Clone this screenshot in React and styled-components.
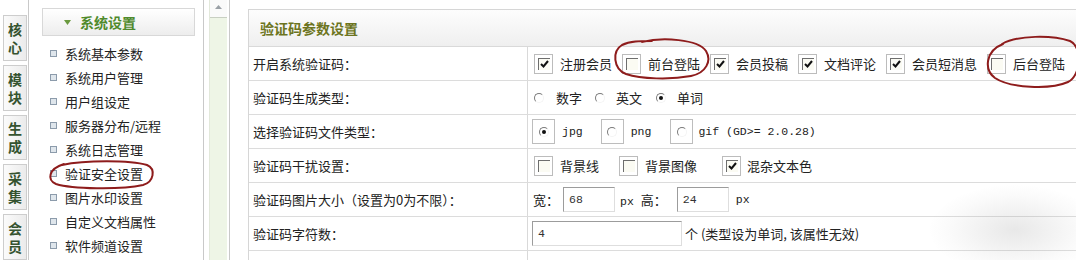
import React from 'react';
import styled, { createGlobalStyle } from 'styled-components';

const GlobalStyle = createGlobalStyle`
  html, body {
    margin: 0;
    padding: 0;
    background: #ffffff;
  }
  body {
    font-family: "Noto Sans CJK SC", "Noto Sans", sans-serif;
    font-size: 13px;
    color: #222222;
  }
`;

const Page = styled.div`
  position: relative;
  width: 1076px;
  height: 260px;
  overflow: hidden;
  display: flex;
  align-items: flex-start;
`;

/* left vertical tabs */
const TabBar = styled.div`
  width: 29px;
  height: 260px;
  box-sizing: border-box;
  border-right: 1px solid #c9c9c9;
  padding: 15px 0 0 3px;
  display: flex;
  flex-direction: column;
  gap: 4px;
  flex-shrink: 0;
`;

const Tab = styled.div`
  width: 24px;
  height: 47px;
  box-sizing: border-box;
  border: 1px solid #cdcdcd;
  background: linear-gradient(to right, #fbfbfb, #ebebeb);
  display: flex;
  flex-direction: column;
  align-items: center;
  justify-content: center;
  font-size: 14px;
  font-weight: bold;
  line-height: 18px;
  color: #35532f;
`;

/* menu */
const Menu = styled.div`
  width: 175px;
  height: 260px;
  box-sizing: border-box;
  border-right: 1px solid #c9c9c9;
  padding: 8px 0 0 13px;
  flex-shrink: 0;
`;

const MenuHeader = styled.div`
  width: 153px;
  height: 28px;
  box-sizing: border-box;
  border: 1px solid #d8d8d8;
  background: linear-gradient(#ffffff, #ededed);
  display: flex;
  align-items: center;
  gap: 9px;
  padding-left: 21px;
  font-size: 14px;
  font-weight: bold;
  color: #4f8a2c;
`;

const MenuList = styled.ul`
  list-style: none;
  margin: 5px 0 0 0;
  padding: 0 0 0 8px;
`;

const MenuItem = styled.li`
  height: 24px;
  display: flex;
  align-items: center;
  gap: 8px;
  font-size: 13px;
  color: #222;
  white-space: nowrap;
`;

const Bullet = styled.span`
  width: 5px;
  height: 5px;
  border: 1px solid #8c9bab;
  background: #dfe6ec;
  flex-shrink: 0;
`;

/* scroll strip */
const Strip = styled.div`
  width: 26px;
  height: 260px;
  box-sizing: border-box;
  border-right: 1px solid #c9c9c9;
  padding: 0 2px 0 5px;
  flex-shrink: 0;
`;

const Track = styled.div`
  height: 100%;
  background: #eef5e6;
  border-left: 1px solid #e2e8da;
`;

const ScrollButton = styled.div`
  height: 18px;
  box-sizing: border-box;
  background: #fafafa;
  border-bottom: 1px solid #c8cfc2;
  display: flex;
  justify-content: center;
  padding-top: 5px;
`;

/* main table */
const Panel = styled.div`
  margin: 9px 0 0 18px;
  width: 860px;
  flex-shrink: 0;
  border-top: 1px solid #d6d6d6;
  border-left: 1px solid #d6d6d6;
`;

const PanelHeader = styled.div`
  height: 37px;
  box-sizing: border-box;
  border-bottom: 1px solid #d9d9d9;
  background: linear-gradient(#fdfdfd, #efefef);
  padding-left: 11px;
  display: flex;
  align-items: center;
  font-size: 14px;
  font-weight: bold;
  color: #6c7420;
`;

const Row = styled.div`
  height: 34px;
  box-sizing: border-box;
  border-bottom: 1px solid #dcdcdc;
  display: grid;
  grid-template-columns: 279px 1fr;
`;

const Label = styled.div`
  border-right: 1px solid #d9d9d9;
  padding-left: 4px;
  display: flex;
  align-items: center;
  font-size: 13px;
  white-space: nowrap;
`;

const Value = styled.div`
  padding-left: ${({ $pad }) => $pad ?? 5}px;
  display: flex;
  align-items: center;
  font-size: 13px;
  white-space: nowrap;
`;

const Option = styled.span`
  display: inline-flex;
  align-items: center;
  gap: ${({ $gap }) => $gap ?? 7}px;
  margin-right: ${({ $space }) => $space ?? 10}px;
`;

const CheckFrame = styled.span`
  width: 19px;
  height: 20px;
  box-sizing: border-box;
  border: 1px solid #bcbcbc;
  background: #ffffff;
  display: inline-flex;
  align-items: center;
  justify-content: center;
`;

const CheckInner = styled.span`
  width: 12px;
  height: 12px;
  box-sizing: border-box;
  border-top: 1px solid #6e6e6e;
  border-left: 1px solid #6e6e6e;
  background: #fbfbf3;
  display: flex;
  align-items: center;
  justify-content: center;
`;

const RadioFrame = styled.span`
  width: 23px;
  height: 25px;
  box-sizing: border-box;
  border: 1px solid #bdbdbd;
  display: inline-flex;
  align-items: center;
  justify-content: center;
`;

const RadioDot = styled.span`
  width: 10px;
  height: 10px;
  box-sizing: border-box;
  border-radius: 50%;
  border: 1px solid;
  border-color: #7a7a7a #f4f4f4 #f4f4f4 #7a7a7a;
  background: #ffffff;
  display: inline-flex;
  align-items: center;
  justify-content: center;
  &::after {
    content: '';
    width: 4px;
    height: 4px;
    border-radius: 50%;
    background: ${({ $on }) => ($on ? '#111' : 'transparent')};
  }
`;

const Mono = styled.span`
  font-family: "Liberation Mono", "DejaVu Sans Mono", monospace;
  font-size: 11.5px;
  color: #222;
`;

const TextBox = styled.span`
  width: ${({ $w }) => $w}px;
  height: 25px;
  box-sizing: border-box;
  border: 1px solid;
  border-color: #9c9c9c #dedede #dedede #9c9c9c;
  background: #fff;
  display: inline-flex;
  align-items: center;
  padding-left: 5px;
  font-family: "Liberation Mono", "DejaVu Sans Mono", monospace;
  font-size: 11.5px;
  color: #333;
`;

const Marks = styled.svg`
  position: absolute;
  left: 0;
  top: 0;
  pointer-events: none;
`;

const Smudge = styled.div`
  position: absolute;
  left: 930px;
  top: 185px;
  width: 170px;
  height: 90px;
  border-radius: 50%;
  background: radial-gradient(ellipse at center, rgba(150,150,150,0.22), rgba(200,200,200,0.08) 55%, rgba(255,255,255,0) 72%);
  pointer-events: none;
`;

const Check = () => (
  <svg width="9" height="8" viewBox="0 0 9 8">
    <path d="M1 4 L3.5 6.5 L8 1" stroke="#111" strokeWidth="2" fill="none" />
  </svg>
);

const Checkbox = ({ on }) => (
  <CheckFrame>
    <CheckInner>{on && <Check />}</CheckInner>
  </CheckFrame>
);

const tabs = [['核', '心'], ['模', '块'], ['生', '成'], ['采', '集'], ['会', '员']];

const menu = [
  '系统基本参数',
  '系统用户管理',
  '用户组设定',
  '服务器分布/远程',
  '系统日志管理',
  '验证安全设置',
  '图片水印设置',
  '自定义文档属性',
  '软件频道设置',
];

const captchaOn = [
  ['注册会员', true],
  ['前台登陆', false],
  ['会员投稿', true],
  ['文档评论', true],
  ['会员短消息', true],
  ['后台登陆', false],
];

export default function App() {
  return (
    <>
      <GlobalStyle />
      <Page>
        <TabBar>
          {tabs.map(([a, b]) => (
            <Tab key={a}>
              <span>{a}</span>
              <span>{b}</span>
            </Tab>
          ))}
        </TabBar>

        <Menu>
          <MenuHeader>
            <svg width="7" height="5" viewBox="0 0 7 5">
              <path d="M0 0 L7 0 L3.5 5 Z" fill="#6a9a3e" />
            </svg>
            系统设置
          </MenuHeader>
          <MenuList>
            {menu.map((m) => (
              <MenuItem key={m}>
                <Bullet />
                {m}
              </MenuItem>
            ))}
          </MenuList>
        </Menu>

        <Strip>
          <Track>
            <ScrollButton>
              <svg width="7" height="4" viewBox="0 0 7 4">
                <path d="M0 4 L3.5 0 L7 4 Z" fill="#9aa0a6" />
              </svg>
            </ScrollButton>
          </Track>
        </Strip>

        <Panel>
          <PanelHeader>验证码参数设置</PanelHeader>

          <Row>
            <Label>开启系统验证码：</Label>
            <Value $pad={6}>
              {captchaOn.map(([t, on]) => (
                <Option key={t}>
                  <Checkbox on={on} />
                  {t}
                </Option>
              ))}
            </Value>
          </Row>

          <Row>
            <Label>验证码生成类型：</Label>
            <Value $pad={6}>
              <Option $gap={12} $space={13}>
                <RadioDot />
                数字
              </Option>
              <Option $gap={11} $space={14}>
                <RadioDot />
                英文
              </Option>
              <Option $gap={11}>
                <RadioDot $on />
                单词
              </Option>
            </Value>
          </Row>

          <Row>
            <Label>选择验证码文件类型：</Label>
            <Value $pad={4}>
              <Option $space={18}>
                <RadioFrame>
                  <RadioDot $on />
                </RadioFrame>
                <Mono>jpg</Mono>
              </Option>
              <Option $space={19}>
                <RadioFrame>
                  <RadioDot />
                </RadioFrame>
                <Mono>png</Mono>
              </Option>
              <Option $gap={5}>
                <RadioFrame>
                  <RadioDot />
                </RadioFrame>
                <Mono>gif (GD&gt;= 2.0.28)</Mono>
              </Option>
            </Value>
          </Row>

          <Row>
            <Label>验证码干扰设置：</Label>
            <Value $pad={6}>
              <Option $space={20}>
                <Checkbox />
                背景线
              </Option>
              <Option $space={25}>
                <Checkbox />
                背景图像
              </Option>
              <Option $gap={6}>
                <Checkbox on />
                混杂文本色
              </Option>
            </Value>
          </Row>

          <Row>
            <Label>验证码图片大小（设置为0为不限）：</Label>
            <Value>
              <Option $gap={4} $space={5}>
                宽：
                <TextBox $w={52}>68</TextBox>
              </Option>
              <Option $gap={10} $space={7}>
                <span>
                  <Mono>px </Mono>高：
                </span>
                <TextBox $w={52}>24</TextBox>
              </Option>
              <Mono>px</Mono>
            </Value>
          </Row>

          <Row>
            <Label>验证码字符数：</Label>
            <Value $pad={4}>
              <Option $gap={3}>
                <TextBox $w={150}>4</TextBox>
                个 (类型设为单词, 该属性无效)
              </Option>
            </Value>
          </Row>

          <Row>
            <Label />
            <Value />
          </Row>
        </Panel>

        <Smudge />

        <Marks width="1076" height="260" viewBox="0 0 1076 260">
          <g stroke="#8e1c1c" strokeWidth="2" fill="none" strokeLinecap="round">
            <path d="M62 165 C85 160, 130 160, 147 165 C156 169, 154 182, 143 185 C120 190, 72 189, 56 184 C47 180, 48 169, 64 164" />
            <path d="M642 42 C662 37, 698 39, 706 51 C712 61, 706 73, 691 76 C670 80, 641 79, 626 74 C613 69, 612 51, 622 45 C630 41, 640 41, 652 41" />
            <path d="M1002 44 C1018 35, 1052 35, 1070 41 C1083 47, 1081 76, 1068 82 C1050 90, 1010 88, 995 78 C984 70, 985 51, 1003 44" />
          </g>
        </Marks>
      </Page>
    </>
  );
}
